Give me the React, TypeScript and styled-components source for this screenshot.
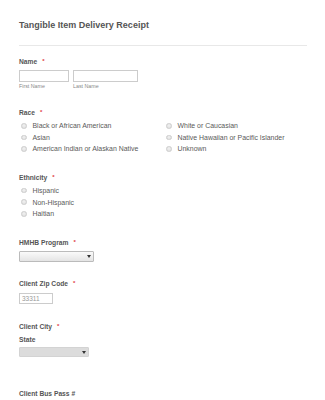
import React from "react";
import styled, { createGlobalStyle } from "styled-components";

const Global = createGlobalStyle`
  html, body { margin: 0; padding: 0; background: #fff; }
  body { font-family: "Liberation Sans", Arial, sans-serif; }
`;

const Page = styled.div`
  width: 325px;
  height: 400px;
  overflow: hidden;
  box-sizing: border-box;
  padding: 20px 18px 0 19px;
`;

const Title = styled.h1`
  margin: 0;
  font-size: 9px;
  line-height: 10px;
  font-weight: bold;
  color: #555;
`;

const Rule = styled.hr`
  margin: 15px 0 0 0;
  border: none;
  border-top: 1px solid #e8e8e8;
  width: 288px;
`;

const Field = styled.div<{ $top: number }>`
  margin-top: ${(p) => p.$top}px;
  display: flex;
  flex-direction: column;
`;

const Label = styled.div<{ $gap?: number }>`
  font-size: 6.7px;
  line-height: 8px;
  font-weight: bold;
  color: #555;
  margin-bottom: ${(p) => p.$gap ?? 3}px;
  display: flex;
  align-items: flex-start;
`;

const Star = styled.span`
  color: #e0393e;
  font-size: 6px;
  margin-left: 5px;
  line-height: 6px;
`;

const SubLabel = styled.div`
  font-size: 6.7px;
  line-height: 8px;
  color: #555;
  font-weight: bold;
  margin-top: 1px;
  margin-bottom: 3px;
`;

const NameRow = styled.div`
  display: flex;
  gap: 4px;
`;

const NameCol = styled.div`
  display: flex;
  flex-direction: column;
`;

const TextBox = styled.div<{ $w: number; $h?: number }>`
  width: ${(p) => p.$w}px;
  height: ${(p) => p.$h ?? 12}px;
  box-sizing: border-box;
  border: 1px solid #ccc;
  background: #fff;
  font-size: 6.5px;
  line-height: ${(p) => (p.$h ?? 12) - 2}px;
  color: #999;
  padding-left: 2px;
`;

const Hint = styled.div`
  font-size: 5.3px;
  line-height: 6px;
  color: #888;
  margin-top: 1px;
`;

const RadioGrid = styled.div<{ $cols: number }>`
  display: grid;
  grid-template-columns: ${(p) => (p.$cols === 2 ? "145px 145px" : "150px")};
  grid-auto-flow: column;
  grid-template-rows: repeat(3, 11.6px);
`;

const RadioItem = styled.div`
  display: flex;
  align-items: center;
  padding-left: 2px;
  font-size: 6.93px;
  color: #5a5a5a;
  white-space: nowrap;
`;

const Dot = styled.span`
  width: 5.5px;
  height: 5.5px;
  border-radius: 50%;
  border: 0.5px solid #cdcdcd;
  background: radial-gradient(circle at 50% 40%, #f2f2f2, #dadada);
  margin-right: 6px;
  box-sizing: border-box;
  flex: none;
`;

const Select = styled.div<{ $w: number; $flat?: boolean }>`
  width: ${(p) => p.$w}px;
  height: ${(p) => (p.$flat ? 10 : 11)}px;
  box-sizing: border-box;
  border: 1px solid ${(p) => (p.$flat ? "#d3d3d3" : "#bbb")};
  border-radius: 1px;
  background: ${(p) =>
    p.$flat ? "#dcdcdc" : "linear-gradient(#fafafa, #e4e4e4)"};
  display: flex;
  align-items: center;
  justify-content: flex-end;
  padding-right: 2.5px;
`;

const Arrow = styled.span`
  width: 0;
  height: 0;
  border-left: 2px solid transparent;
  border-right: 2px solid transparent;
  border-top: 3px solid #333;
`;

const race = [
  "Black or African American",
  "Asian",
  "American Indian or Alaskan Native",
  "White or Caucasian",
  "Native Hawaiian or Pacific Islander",
  "Unknown",
];

const ethnicity = ["Hispanic", "Non-Hispanic", "Haitian"];

export default function App() {
  return (
    <>
      <Global />
      <Page>
        <Title>Tangible Item Delivery Receipt</Title>
        <Rule />
        <Field $top={12}>
          <Label $gap={4}>
            Name<Star>*</Star>
          </Label>
          <NameRow>
            <NameCol>
              <TextBox $w={50} />
              <Hint>First Name</Hint>
            </NameCol>
            <NameCol>
              <TextBox $w={65} />
              <Hint>Last Name</Hint>
            </NameCol>
          </NameRow>
        </Field>
        <Field $top={20}>
          <Label $gap={3}>
            Race<Star>*</Star>
          </Label>
          <RadioGrid $cols={2}>
            {race.map((r) => (
              <RadioItem key={r}>
                <Dot />
                {r}
              </RadioItem>
            ))}
          </RadioGrid>
        </Field>
        <Field $top={19.5}>
          <Label $gap={2.5}>
            Ethnicity<Star>*</Star>
          </Label>
          <RadioGrid $cols={1}>
            {ethnicity.map((r) => (
              <RadioItem key={r}>
                <Dot />
                {r}
              </RadioItem>
            ))}
          </RadioGrid>
        </Field>
        <Field $top={19}>
          <Label $gap={4.5}>
            HMHB Program<Star>*</Star>
          </Label>
          <Select $w={75}>
            <Arrow />
          </Select>
        </Field>
        <Field $top={18.3}>
          <Label $gap={5}>
            Client Zip Code<Star>*</Star>
          </Label>
          <TextBox $w={34} $h={11}>33311</TextBox>
        </Field>
        <Field $top={18.3}>
          <Label $gap={4.5}>
            Client City<Star>*</Star>
          </Label>
          <SubLabel>State</SubLabel>
          <Select $w={70} $flat>
            <Arrow />
          </Select>
        </Field>
        <Field $top={32.5}>
          <Label>Client Bus Pass #</Label>
        </Field>
      </Page>
    </>
  );
}
